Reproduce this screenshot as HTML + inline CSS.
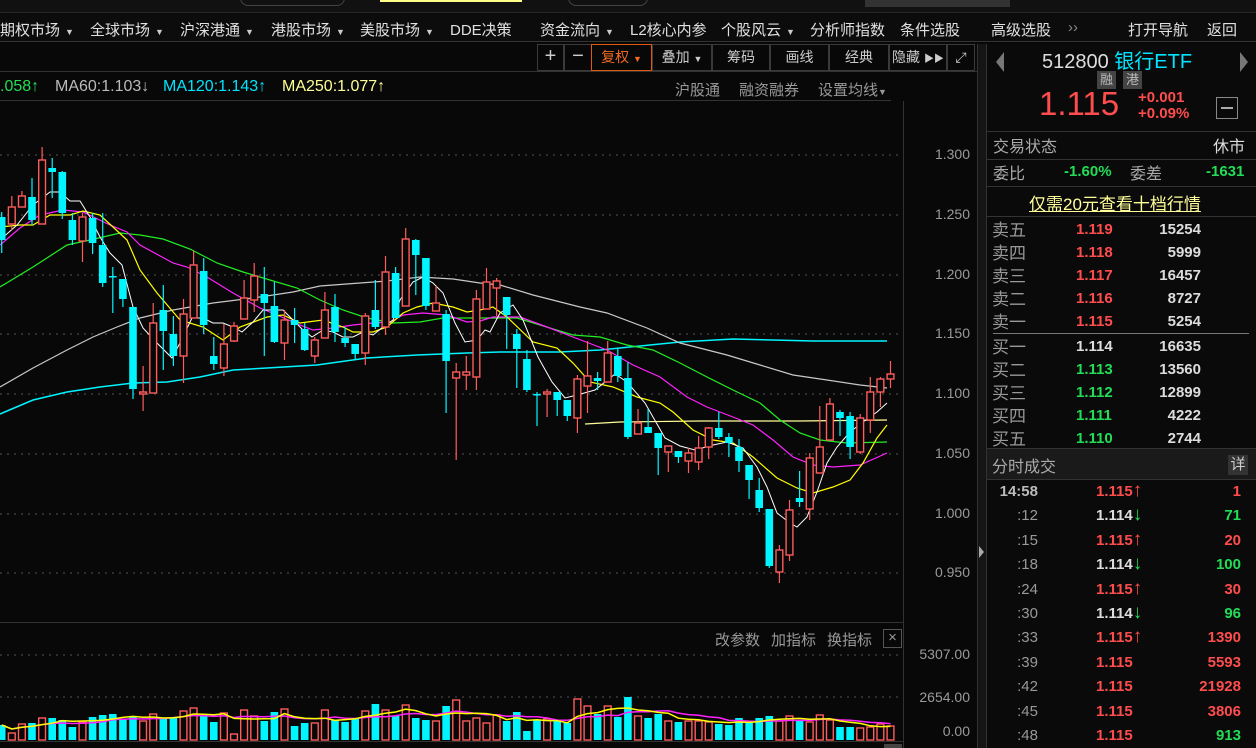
<!DOCTYPE html>
<html><head><meta charset="utf-8">
<style>
*{margin:0;padding:0;box-sizing:border-box}
body{width:1256px;height:748px;background:#080808;overflow:hidden;position:relative;font-family:"Liberation Sans","Noto Sans CJK SC",sans-serif;color:#ccc}
.a{position:absolute;white-space:nowrap}
.m{font-size:15px;color:#e0e0e0;top:19px}
.m i{font-style:normal;font-size:9px;color:#ccc;margin-left:5px}
.tb{position:absolute;top:44px;height:27px;border:1px solid #3a3a3a;font-size:14px;color:#ccc;text-align:center;line-height:25px}
.g{color:#999;font-size:15px}
.r{color:#ff4d4d}.gr{color:#22dd55}.cy{color:#00e5ff}
.ob{font-size:15px;font-weight:bold}
.ax{position:absolute;right:286px;font-size:14px;color:#9a9a9a;text-align:right}
.lg{position:absolute;top:78px;font-size:16px;white-space:nowrap}
</style></head><body>
<div class="a" style="left:0;top:0;width:1256px;height:13px;background:#111;border-bottom:1px solid #2a2a2a"></div>
<div class="a" style="left:240px;top:-10px;width:105px;height:16px;border:1px solid #444;border-radius:8px"></div>
<div class="a" style="left:380px;top:0;width:142px;height:2px;background:#ffff88"></div>
<div class="a" style="left:568px;top:-10px;width:80px;height:16px;border:1px solid #444;border-radius:8px"></div>
<div class="a" style="left:865px;top:0;width:145px;height:7px;background:#333"></div>
<div class="a" style="left:0;top:14px;width:1256px;height:28px;background:#0c0c0c;border-bottom:1px solid #333"></div>
<span class="a m" style="left:0">期权市场<i>▼</i></span>
<span class="a m" style="left:90px">全球市场<i>▼</i></span>
<span class="a m" style="left:180px">沪深港通<i>▼</i></span>
<span class="a m" style="left:271px">港股市场<i>▼</i></span>
<span class="a m" style="left:360px">美股市场<i>▼</i></span>
<span class="a m" style="left:450px">DDE决策</span>
<span class="a m" style="left:540px">资金流向<i>▼</i></span>
<span class="a m" style="left:630px">L2核心内参</span>
<span class="a m" style="left:721px">个股风云<i>▼</i></span>
<span class="a m" style="left:810px">分析师指数</span>
<span class="a m" style="left:900px">条件选股</span>
<span class="a m" style="left:991px">高级选股</span>
<span class="a m" style="left:1068px;color:#888">››</span>
<span class="a m" style="left:1128px">打开导航</span>
<span class="a m" style="left:1207px">返回</span>
<div class="tb" style="left:537px;width:27px;font-size:20px;line-height:23px">+</div>
<div class="tb" style="left:564px;width:28px;font-size:20px;line-height:23px">−</div>
<div class="tb" style="left:591px;width:61px;border-color:#e05a10;color:#f06a20">复权 <span style="font-size:9px">▼</span></div>
<div class="tb" style="left:652px;width:60px">叠加 <span style="font-size:9px">▼</span></div>
<div class="tb" style="left:712px;width:58px">筹码</div>
<div class="tb" style="left:770px;width:59px">画线</div>
<div class="tb" style="left:829px;width:60px">经典</div>
<div class="tb" style="left:889px;width:58px">隐藏 <span style="font-size:10px">▶▶</span></div>
<div class="tb" style="left:947px;width:28px;font-size:14px">⤢</div>
<div class="a" style="left:0;top:71px;width:977px;height:1px;background:#333"></div>
<span class="lg gr" style="left:0">.058↑</span>
<span class="lg" style="left:55px;color:#bbb">MA60:1.103↓</span>
<span class="lg cy" style="left:163px">MA120:1.143↑</span>
<span class="lg" style="left:282px;color:#ffff99">MA250:1.077↑</span>
<span class="a g" style="left:675px;top:79px">沪股通</span>
<span class="a g" style="left:739px;top:79px">融资融券</span>
<span class="a g" style="left:818px;top:79px">设置均线<span style="font-size:9px">▼</span></span>
<div class="a" style="left:0;top:100px;width:891px;height:1px;background:#333"></div>
<div class="a" style="left:903px;top:101px;width:1px;height:647px;background:#333"></div>
<div class="a" style="left:977px;top:44px;width:10px;height:704px;background:#151515;border-left:1px solid #333;border-right:1px solid #333"></div>
<div class="a" style="left:979px;top:546px;width:0;height:0;border-left:5px solid #aaa;border-top:6px solid transparent;border-bottom:6px solid transparent"></div>
<div class="ax" style="top:146px">1.300</div>
<div class="ax" style="top:206px">1.250</div>
<div class="ax" style="top:266px">1.200</div>
<div class="ax" style="top:325px">1.150</div>
<div class="ax" style="top:385px">1.100</div>
<div class="ax" style="top:445px">1.050</div>
<div class="ax" style="top:505px">1.000</div>
<div class="ax" style="top:564px">0.950</div>
<div class="a" style="left:0;top:622px;width:903px;height:1px;background:#333"></div>
<span class="a g" style="left:715px;top:629px">改参数</span>
<span class="a g" style="left:771px;top:629px">加指标</span>
<span class="a g" style="left:827px;top:629px">换指标</span>
<div class="a" style="left:883px;top:629px;width:19px;height:19px;border:1px solid #555;color:#999;font-size:15px;text-align:center;line-height:16px">×</div>
<div class="ax" style="top:646px">5307.00</div>
<div class="ax" style="top:689px">2654.00</div>
<div class="ax" style="top:723px">0.00</div>
<div class="a" style="left:0;top:741px;width:903px;height:1px;background:#333"></div>
<div class="a" style="left:884px;top:744px;width:18px;height:4px;background:#444"></div>
<svg class="a" style="left:0;top:0" width="903" height="748" id="ch"></svg>
<div class="a" style="left:987px;top:44px;width:269px;height:704px;background:#0a0a0a"></div>
<div class="a" style="left:996px;top:52px;width:0;height:0;border-right:8px solid #777;border-top:10px solid transparent;border-bottom:10px solid transparent"></div>
<div class="a" style="left:1240px;top:52px;width:0;height:0;border-left:8px solid #777;border-top:10px solid transparent;border-bottom:10px solid transparent"></div>
<span class="a" style="left:1042px;top:45px;font-size:20px;color:#ddd">512800 <span class="cy">银行ETF</span></span>
<span class="a" style="left:1097px;top:71px;width:19px;height:18px;background:#444;color:#bbb;font-size:13px;text-align:center;line-height:18px">融</span>
<span class="a" style="left:1123px;top:71px;width:19px;height:18px;background:#444;color:#bbb;font-size:13px;text-align:center;line-height:18px">港</span>
<span class="a r" style="left:1039px;top:85px;font-size:33px">1.115</span>
<span class="a r" style="left:1138px;top:89px;font-size:15px;font-weight:bold">+0.001</span>
<span class="a r" style="left:1138px;top:105px;font-size:15px;font-weight:bold">+0.09%</span>
<div class="a" style="left:1216px;top:97px;width:22px;height:22px;border:1px solid #888"><div style="margin:9px 4px;height:2px;background:#aaa"></div></div>
<div class="a" style="left:987px;top:131px;width:269px;height:1px;background:#333"></div>
<span class="a" style="left:993px;top:133px;font-size:16px;color:#aaa">交易状态</span>
<span class="a" style="left:1213px;top:133px;font-size:16px;color:#ddd">休市</span>
<div class="a" style="left:987px;top:159px;width:269px;height:1px;background:#333"></div>
<span class="a" style="left:993px;top:160px;font-size:16px;color:#aaa">委比</span>
<span class="a gr" style="left:1064px;top:163px;font-size:15px;font-weight:bold">-1.60%</span>
<span class="a" style="left:1130px;top:160px;font-size:16px;color:#aaa">委差</span>
<span class="a gr" style="left:1206px;top:163px;font-size:15px;font-weight:bold">-1631</span>
<div class="a" style="left:987px;top:186px;width:269px;height:1px;background:#333"></div>
<span class="a" style="left:1029px;top:190px;font-size:17px;color:#ffff99;text-decoration:underline">仅需20元查看十档行情</span>
<div class="a" style="left:987px;top:216px;width:269px;height:1px;background:#333"></div>
<div id="ob"></div>
<div class="a" style="left:993px;top:333px;width:256px;height:1px;background:#777"></div>
<div class="a" style="left:987px;top:448px;width:269px;height:1px;background:#333"></div>
<div class="a" style="left:987px;top:449px;width:269px;height:30px;background:#1a1a1a"></div>
<span class="a" style="left:992px;top:453px;font-size:16px;color:#aaa">分时成交</span>
<span class="a" style="left:1228px;top:455px;width:20px;height:20px;background:#333;color:#ccc;font-size:15px;text-align:center;line-height:20px">详</span>
<div class="a" style="left:987px;top:479px;width:269px;height:1px;background:#333"></div>
<div id="tk"></div>
<script>
var C=[["c",217,240,212,253],["r",207,224,196,230],["r",196,207,191,207],["c",197,220,178,225],["r",160,224,147,224],["c",168,172,158,198],["c",172,213,171,219],["c",220,240,213,245],["r",217,241,213,262],["c",218,243,213,254],["c",245,283,213,287],["c",276,277,267,313],["c",279,299,279,307],["c",307,389,307,399],["r",392,394,366,411],["r",323,393,303,393],["c",310,331,285,370],["c",334,356,316,366],["r",314,356,299,383],["r",265,318,251,318],["c",271,325,258,334],["c",356,364,337,370],["r",344,368,324,376],["r",326,341,322,342],["r",298,319,280,319],["r",276,300,263,312],["c",294,303,267,356],["c",306,342,282,343],["r",320,343,310,360],["c",320,325,308,343],["c",329,350,323,351],["r",340,356,337,363],["r",310,338,292,338],["c",307,332,294,342],["c",338,343,327,347],["c",344,354,344,360],["r",316,353,313,365],["c",310,327,280,329],["r",272,327,256,335],["c",273,318,267,318],["r",239,306,228,306],["c",240,255,239,295],["c",258,306,258,310],["r",303,311,286,311],["c",314,361,310,413],["r",372,378,363,460],["r",372,375,356,390],["r",299,377,290,390],["r",282,309,268,309],["r",281,288,278,316],["c",297,315,297,349],["c",334,349,329,388],["c",359,390,350,392],["c",394,395,392,426],["r",392,394,389,417],["c",392,400,392,416],["c",400,416,400,421],["r",379,418,375,433],["r",376,386,341,413],["c",378,381,372,390],["r",353,382,341,382],["c",356,376,348,382],["c",378,437,362,439],["r",423,434,409,434],["c",427,433,409,433],["c",433,448,433,475],["r",446,452,446,472],["c",451,457,451,463],["r",453,461,448,473],["r",448,462,436,470],["r",428,447,427,459],["c",428,437,412,439],["c",437,443,433,457],["c",447,461,439,472],["c",465,480,465,499],["c",490,508,478,512],["c",509,566,509,568],["r",550,572,545,583],["r",510,555,500,561],["c",498,502,471,507],["r",458,509,453,520],["r",447,473,406,473],["r",404,440,398,440],["c",412,418,410,436],["c",416,447,412,459],["r",418,452,414,454],["r",392,420,377,433],["r",379,392,377,407],["r",374,379,361,388]];
var V=[725,733,724,723,718,718,720,727,722,717,715,714,719,717,721,714,719,718,711,708,715,722,713,734,710,716,721,712,709,726,723,723,710,720,722,719,711,704,710,716,705,718,720,721,706,700,721,718,723,715,721,712,731,720,719,721,723,699,706,714,706,717,697,716,718,714,721,722,721,721,722,724,725,718,723,718,716,721,716,721,722,715,720,727,727,728,727,724,726];
var RED="#ff5c5c",CY="#00f5ff",s="";
[155,215,275,334,394,454,514,573,655,697].forEach(function(y){s+='<line x1="0" x2="903" y1="'+y+'" y2="'+y+'" stroke="#555" stroke-dasharray="2,5"/>'});
function pl(p,c,w){return '<polyline fill="none" stroke="'+c+'" stroke-width="'+(w||1.2)+'" points="'+p+'"/>'}
s+=pl("0,414 33,400 67,392 100,387 133,383 167,382 200,377 233,370 267,368 317,365 367,358 417,355 467,353 500,352 560,352 600,350 640,346 680,342 733,339 813,341 887,341",CY,1.5);
s+=pl("0,387 33,368 67,350 93,337 117,327 140,318 173,310 213,303 253,298 293,292 320,286 360,283 387,281 420,277 453,279 480,283 500,285 533,295 580,307 607,313 647,328 680,343 727,355 760,365 793,375 827,380 860,385 887,388","#c8c8c8");
s+=pl("585,424 620,422 700,421 800,421 887,420","#ffff99");
s+=pl("0,287 33,267 67,245 90,240 120,233 140,235 163,239 190,249 217,263 243,272 270,280 297,288 320,300 343,310 367,318 393,323 420,322 443,318 473,318 517,318 573,335 600,337 627,345 653,350 680,363 707,377 733,390 760,403 780,420 800,433 820,440 847,443 887,442","#22ee22");
s+=pl("0,245 20,228 40,215 63,210 83,212 110,225 127,232 140,245 173,263 187,267 207,277 233,293 260,308 277,315 300,325 313,330 333,328 353,325 373,323 390,322 403,315 423,313 447,315 467,322 480,321 493,317 520,317 547,327 573,337 607,350 633,365 660,377 687,397 707,407 733,417 753,425 773,440 793,457 813,465 833,467 860,465 887,453","#ff22ff");
s+=pl("0,227 20,225 33,225 50,215 70,215 83,211 100,215 113,227 127,240 140,270 157,293 180,320 203,327 223,340 240,327 267,317 283,315 300,323 323,320 343,327 353,332 373,332 387,327 403,313 417,307 433,303 453,307 467,312 480,310 493,307 507,317 533,342 557,348 573,363 590,382 613,387 637,397 660,403 673,412 693,430 713,440 733,443 753,457 777,478 797,488 813,493 833,487 850,480 863,463 877,438 887,425","#ffff00");
s+=pl("0,240 17,225 33,205 50,192 60,192 70,201 80,201 90,217 100,237 110,253 122,265 133,307 143,328 157,343 172,358 180,343 192,318 203,318 213,323 223,323 233,327 242,332 253,322 263,310 283,310 293,320 303,330 312,337 323,330 333,332 343,337 353,337 363,332 373,335 383,327 393,320 400,300 413,282 423,277 433,283 443,293 455,323 465,342 477,340 485,330 490,332 500,313 513,305 523,320 538,357 552,382 565,398 577,395 595,390 615,374 627,382 645,403 665,438 680,446 695,450 713,445 727,442 743,448 757,467 767,487 777,513 790,523 797,527 807,517 817,492 827,463 837,447 850,432 863,422 877,412 887,403","#ffffff",1);
C.forEach(function(d,i){var x=(1.7+10.1*i),col=d[0]=="r"?RED:CY;
s+='<line x1="'+x+'" x2="'+x+'" y1="'+d[3]+'" y2="'+d[4]+'" stroke="'+col+'" stroke-width="1.2"/>';
var h=Math.max(1.5,d[2]-d[1]);
if(d[0]=="r")s+='<rect x="'+(x-3.4)+'" y="'+d[1]+'" width="6.8" height="'+h+'" fill="#080808" stroke="'+col+'" stroke-width="1.4"/>';
else s+='<rect x="'+(x-3.8)+'" y="'+d[1]+'" width="7.6" height="'+h+'" fill="'+col+'"/>';
var v=V[i];
if(d[0]=="r")s+='<rect x="'+(x-3.4)+'" y="'+v+'" width="6.8" height="'+(740-v)+'" fill="none" stroke="'+col+'" stroke-width="1.4"/>';
else s+='<rect x="'+(x-3.8)+'" y="'+v+'" width="7.6" height="'+(740-v)+'" fill="'+col+'"/>';
});
var y1="",y2="";V.forEach(function(v,i){var a=0,b=0,n=0,m=0;for(var k=Math.max(0,i-4);k<=i;k++){a+=V[k];n++}for(var k=Math.max(0,i-9);k<=i;k++){b+=V[k];m++}var x=(1.7+10.1*i).toFixed(1);y1+=x+","+(a/n).toFixed(1)+" ";y2+=x+","+(b/m).toFixed(1)+" "});
s+=pl(y2,"#ff22ff",1.5)+pl(y1,"#ffff00",1.5);
document.getElementById("ch").innerHTML=s;
var ob=[["卖五","1.119","15254","r"],["卖四","1.118","5999","r"],["卖三","1.117","16457","r"],["卖二","1.116","8727","r"],["卖一","1.115","5254","r"],["买一","1.114","16635","w"],["买二","1.113","13560","g"],["买三","1.112","12899","g"],["买四","1.111","4222","g"],["买五","1.110","2744","g"]];
var Y=[219,242,265,288,311,336,359,382,405,428],h="";
ob.forEach(function(r,i){var c=r[3]=="r"?"#ff4d4d":r[3]=="g"?"#22dd55":"#ddd";
h+='<span class="a" style="left:992px;top:'+(Y[i]-3)+'px;font-size:17px;color:#999">'+r[0]+'</span><span class="a ob" style="left:1076px;top:'+(Y[i]+2)+'px;color:'+c+'">'+r[1]+'</span><span class="a ob" style="right:55px;top:'+(Y[i]+2)+'px;color:#ddd">'+r[2]+'</span>'});
document.getElementById("ob").innerHTML=h;
var tk=[["14:58","1.115","↑","1","r","r"],[":12","1.114","↓","71","w","g"],[":15","1.115","↑","20","r","r"],[":18","1.114","↓","100","w","g"],[":24","1.115","↑","30","r","r"],[":30","1.114","↓","96","w","g"],[":33","1.115","↑","1390","r","r"],[":39","1.115","","5593","r","r"],[":42","1.115","","21928","r","r"],[":45","1.115","","3806","r","r"],[":48","1.115","","913","r","g"]];
var col={r:"#ff4d4d",g:"#22dd55",w:"#ddd"};h="";
tk.forEach(function(t,i){var y=483+i*24.4;
h+='<span class="a" style="right:218px;top:'+y+'px;font-size:15px;color:#999;'+(i==0?'font-weight:bold;color:#bbb':'')+'">'+t[0]+'</span><span class="a ob" style="left:1096px;top:'+y+'px;color:'+col[t[4]]+'">'+t[1]+'<span style="font-size:19px;line-height:15px;color:'+(t[2]=="↑"?"#ff4d4d":"#22dd55")+'">'+t[2]+'</span></span><span class="a ob" style="right:15px;top:'+y+'px;color:'+col[t[5]]+'">'+t[3]+'</span>'});
document.getElementById("tk").innerHTML=h;
</script>
</body></html>
